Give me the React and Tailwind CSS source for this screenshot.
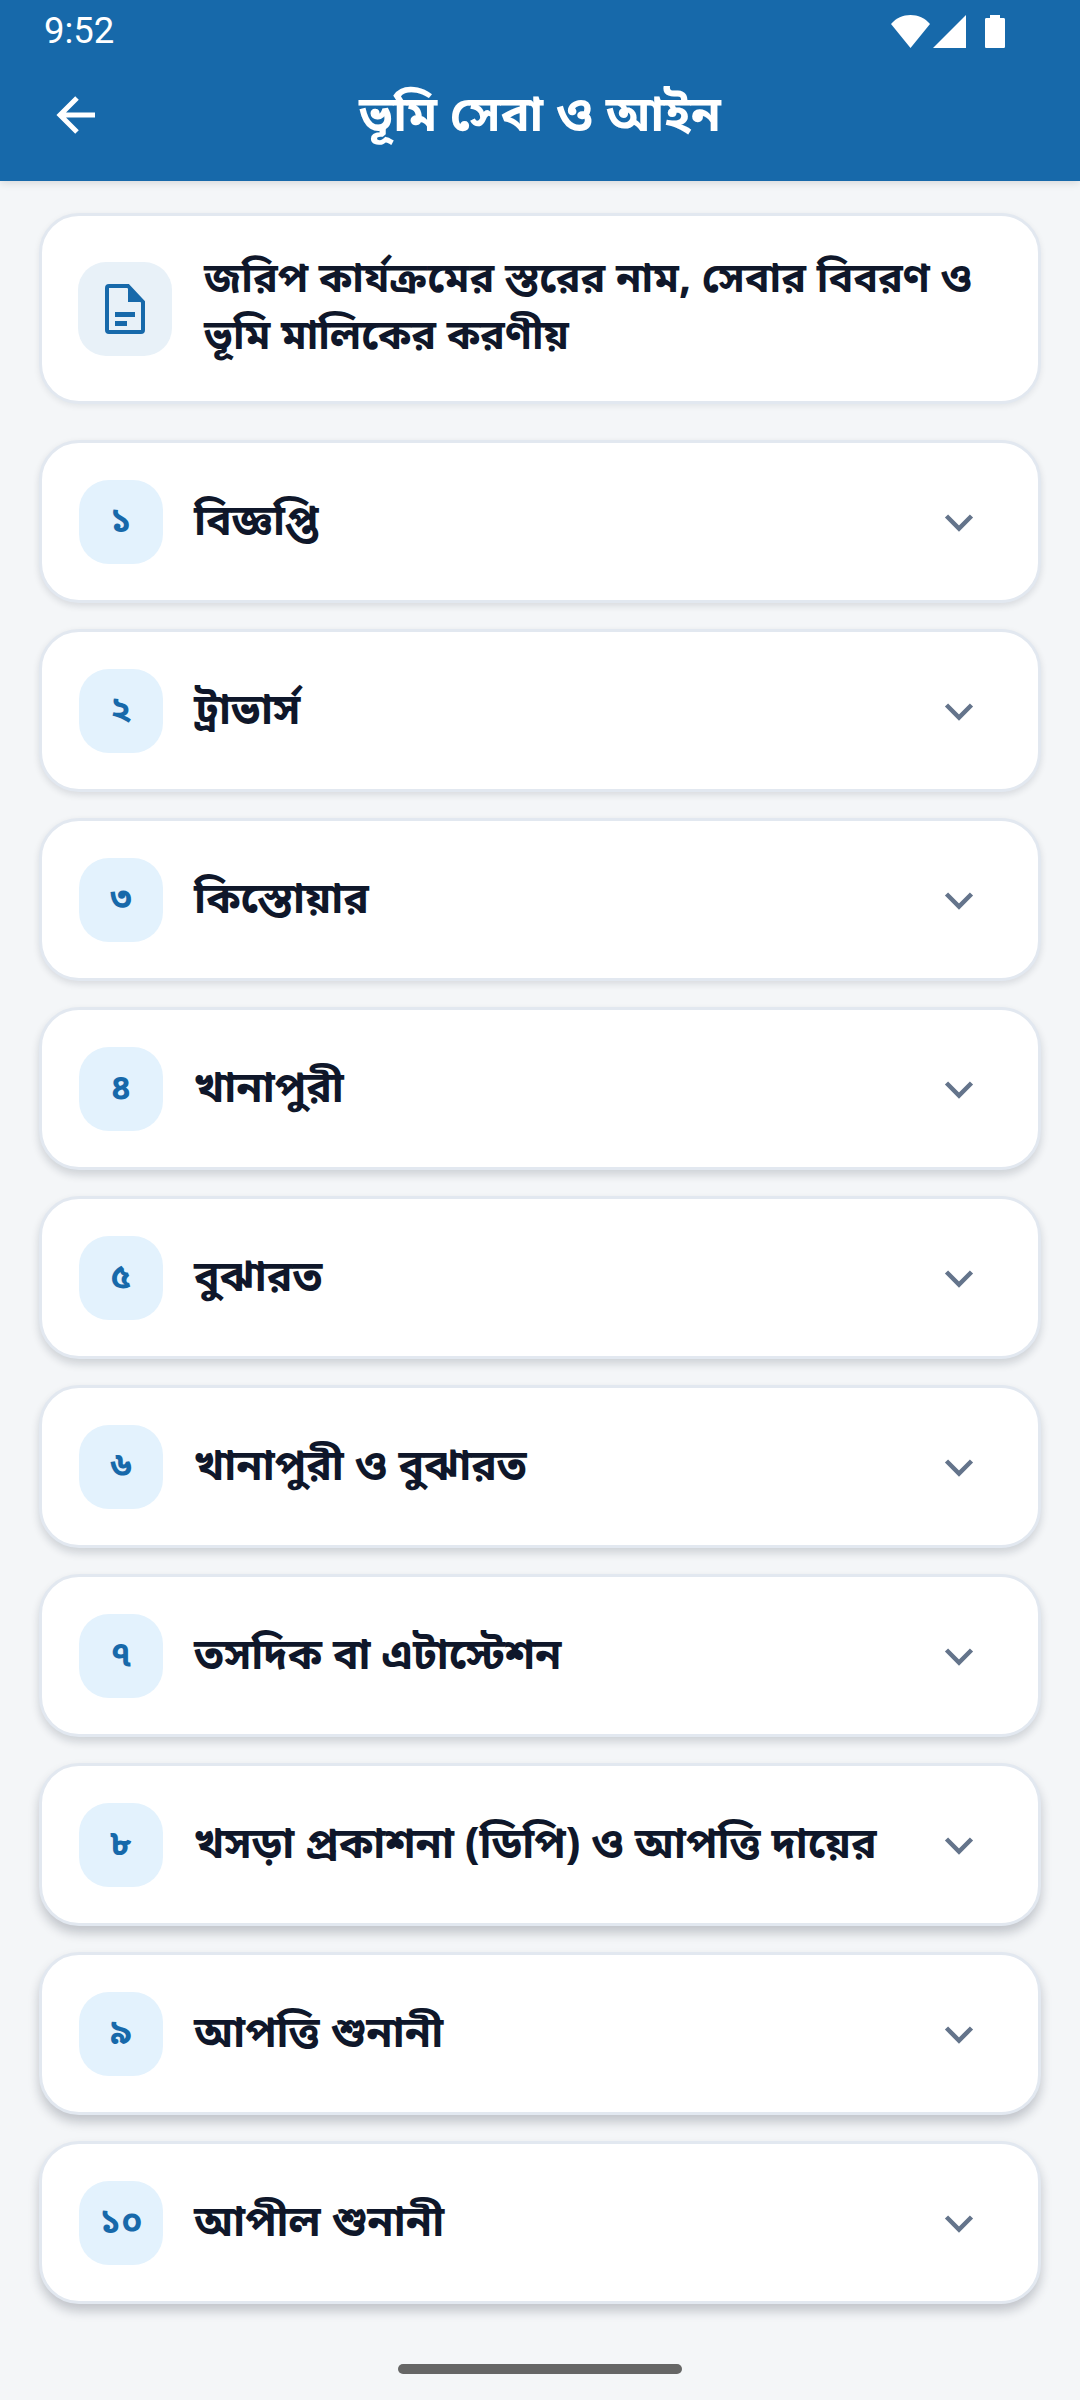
import React from "react";

const steps = [
  "বিজ্ঞপ্তি",
  "ট্রাভার্স",
  "কিস্তোয়ার",
  "খানাপুরী",
  "বুঝারত",
  "খানাপুরী ও বুঝারত",
  "তসদিক বা এটাস্টেশন",
  "খসড়া প্রকাশনা (ডিপি) ও আপত্তি দায়ের",
  "আপত্তি শুনানী",
  "আপীল শুনানী",
];
const nums = ["১", "২", "৩", "৪", "৫", "৬", "৭", "৮", "৯", "১০"];

// shadow gets heavier further down the screen
const shadowFor = (i) => {
  if (i < 3) return "shadow-[0_3px_7px_rgba(15,23,42,0.12)]";
  if (i < 7) return "shadow-[0_5px_9px_rgba(15,23,42,0.16)]";
  return "shadow-[0_7px_11px_rgba(15,23,42,0.22)]";
};

const Chevron = () => (
  <svg width="32" height="24" viewBox="0 0 32 24" className="shrink-0">
    <path d="M3.500 6 16 18.500 28.500 6" fill="none" stroke="#64748b" strokeWidth="4.500" />
  </svg>
);

const StatusIcons = () => (
  <svg width="114" height="33" viewBox="0 0 114 33" className="mr-[31px]">
    <path d="M0 9C5 3 12 0 19.500 0S34 3 39 9L19.500 33z" fill="#fff" />
    <path d="M42 33 75 0v33z" fill="#fff" />
    <path d="M94 4.500c0-1 .6-1.500 1.500-1.500h3.500V0h10v3h3.500c.9 0 1.500.5 1.500 1.500v27c0 1-.6 1.500-1.500 1.500h-17c-.9 0-1.500-.5-1.500-1.500z" fill="#fff" />
  </svg>
);

export default function App() {
  return (
    <div className="w-[1080px] h-[2400px] bg-[#f4f6f8] flex flex-col font-['Noto_Sans_Bengali','Noto_Sans','Liberation_Sans',sans-serif]">
      <div className="bg-[#1769aa] h-[181px] pl-11 pr-11 text-white flex flex-col shadow-[0_2px_8px_rgba(0,0,0,0.12)]">
        <div className="flex justify-between items-center h-[62px]">
          <span className="font-['Roboto'] text-[36.5px] leading-none">9:52</span>
          <StatusIcons />
        </div>
        <div className="flex items-center h-[106px] relative">
          <svg width="42" height="42" viewBox="0 0 42 42" className="shrink-0 ml-[11px]">
            <path d="M40 21H5M22 4 5 21l17 17" fill="none" stroke="#fff" strokeWidth="5" />
          </svg>
          <div className="absolute inset-0 pt-[4px] text-[48.5px] font-bold text-center leading-[106px]">ভূমি সেবা ও আইন</div>
        </div>
      </div>

      <div className="flex flex-col px-[39px] pt-8">
        <div className="h-[191px] bg-white rounded-[40px] border-[3px] border-[#e2e8f0] shadow-[0_2px_6px_rgba(15,23,42,0.08)] flex items-center pl-[36px] mb-9">
          <div className="w-[94px] h-[94px] rounded-[28px] bg-[#e8f1f8] flex items-center justify-center shrink-0">
            <svg width="40" height="50" viewBox="0 0 40 50">
              <path d="M4 2h19l15 16v28a2 2 0 0 1-2 2H4a2 2 0 0 1-2-2V4a2 2 0 0 1 2-2z" fill="none" stroke="#1769aa" strokeWidth="4" />
              <path d="M23 2v16h15z" fill="#1769aa" />
              <path d="M10 28h20v5H10zM10 37h12v5H10z" fill="#1769aa" />
            </svg>
          </div>
          <div className="ml-8 pt-[2px] text-[41.2px] leading-[57px] font-bold text-[#0f172a] whitespace-nowrap">
            জরিপ কার্যক্রমের স্তরের নাম, সেবার বিবরণ ও
            <br />
            ভূমি মালিকের করণীয়
          </div>
        </div>

        <div className="flex flex-col gap-[26px]">
          {steps.map((s, i) => (
            <div
              key={i}
              className={`h-[163px] bg-white rounded-[40px] border-[3px] border-[#e2e8f0] flex items-center pl-[37px] pr-[63px] ${shadowFor(i)}`}
            >
              <div className="w-[84px] h-[84px] pt-[3px] rounded-[30px] bg-[#e3f2fd] text-[#1769aa] font-bold flex items-center justify-center text-[35px] shrink-0">
                {nums[i]}
              </div>
              <div className="flex-1 ml-[31px] pt-[6px] text-[42.5px] font-bold text-[#0f172a] whitespace-nowrap">{s}</div>
              <Chevron />
            </div>
          ))}
        </div>
      </div>

      <div className="mt-auto mb-[26px] mx-auto w-[284px] h-[10px] rounded-full bg-[#666666]" />
    </div>
  );
}
